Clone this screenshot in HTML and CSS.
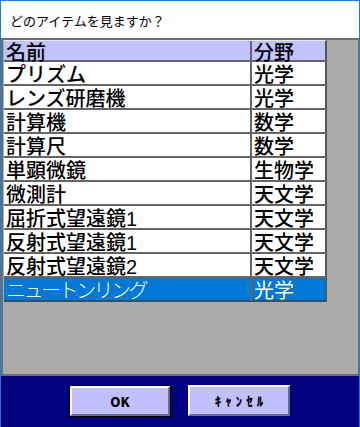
FILE: index.html
```html
<!DOCTYPE html>
<html lang="ja">
<head>
<meta charset="utf-8">
<link rel="stylesheet" href="styles.css">
</head>
<body>
<div class="window">
  <div class="title">どのアイテムを見ますか？</div>
  <div class="panel">
    <div class="grid">
      <div class="row head"><div class="cell c1">名前</div><div class="cell c2">分野</div></div>
      <div class="row"><div class="cell c1">プリズム</div><div class="cell c2">光学</div></div>
      <div class="row"><div class="cell c1">レンズ研磨機</div><div class="cell c2">光学</div></div>
      <div class="row"><div class="cell c1">計算機</div><div class="cell c2">数学</div></div>
      <div class="row"><div class="cell c1">計算尺</div><div class="cell c2">数学</div></div>
      <div class="row"><div class="cell c1">単顕微鏡</div><div class="cell c2">生物学</div></div>
      <div class="row"><div class="cell c1">微測計</div><div class="cell c2">天文学</div></div>
      <div class="row"><div class="cell c1">屈折式望遠鏡1</div><div class="cell c2">天文学</div></div>
      <div class="row"><div class="cell c1">反射式望遠鏡1</div><div class="cell c2">天文学</div></div>
      <div class="row"><div class="cell c1">反射式望遠鏡2</div><div class="cell c2">天文学</div></div>
      <div class="row sel"><div class="cell c1 thin">ニュートンリング</div><div class="cell c2">光学</div></div>
    </div>
  </div>
  <div class="footer">
    <button class="btn default">OK</button>
    <button class="btn wide">ｷｬﾝｾﾙ</button>
  </div>
</div>
</body>
</html>
```
FILE: styles.css
```css
html, body {
  margin: 0;
  padding: 0;
}
body {
  width: 360px;
  height: 427px;
  overflow: hidden;
  font-family: "Noto Sans CJK JP", "Noto Sans", sans-serif;
}
.window {
  box-sizing: border-box;
  width: 360px;
  height: 427px;
  border: 1px solid #1a7fd6;
  border-bottom: none;
  display: flex;
  flex-direction: column;
  background: #ffffff;
}
.title {
  height: 37px;
  box-sizing: border-box;
  padding: 11px 0 0 9px;
  font-size: 13px;
  line-height: 18px;
  color: #000;
}
.panel {
  flex: 1;
  background: #ababab;
  border-top: 2px solid #6e6e6e;
  border-left: 2px solid #6e6e6e;
  border-right: 1px solid #6e6e6e;
  padding-left: 1px;
}
.grid {
  width: 323px;
  display: flex;
  flex-direction: column;
}
.row {
  display: grid;
  grid-template-columns: 248px 75px;
  height: 24px;
  box-sizing: border-box;
  border-bottom: 2px solid #666666;
  background: #ffffff;
  border-right: 2px solid #555555;
}
.row.head {
  height: 22px;
  background: #c2c2ff;
  border-top: 1px solid #e8e8ff;
}
.row.sel {
  background: #0078d7;
  color: #ffffff;
  border-bottom-color: #4a4a4a;
}
.cell {
  font-family: "Liberation Sans", "Noto Sans CJK JP", sans-serif;
  font-size: 20px;
  font-weight: 500;
  line-height: 20px;
  padding: 3px 0 0 2px;
  white-space: nowrap;
}
.head .cell {
  padding-top: 2px;
}
.sel .c2 {
  font-weight: 400;
}
.c1 {
  border-right: 2px solid #666666;
}
.thin {
  letter-spacing: -2.5px;
  font-weight: 300;
}
.footer {
  height: 42px;
  background: #000080;
  border-top: 2px solid #6e6e6e;
  display: flex;
  justify-content: center;
  align-items: flex-start;
  gap: 18px;
  padding-top: 9px;
}
.btn {
  width: 102px;
  height: 31px;
  box-sizing: border-box;
  background: #c0c0ff;
  border: 2px solid;
  border-color: #ffffff #6a6a8a #6a6a8a #ffffff;
  font-family: "Noto Sans CJK JP", sans-serif;
  font-weight: 900;
  font-size: 13px;
  color: #000;
  padding: 0;
  margin: 0;
}
.btn.default {
  outline: 1px solid #000000;
  width: 100px;
  height: 30px;
  margin-top: 1px;
}
.btn.wide {
  letter-spacing: 4px;
  padding-left: 4px;
}
```
